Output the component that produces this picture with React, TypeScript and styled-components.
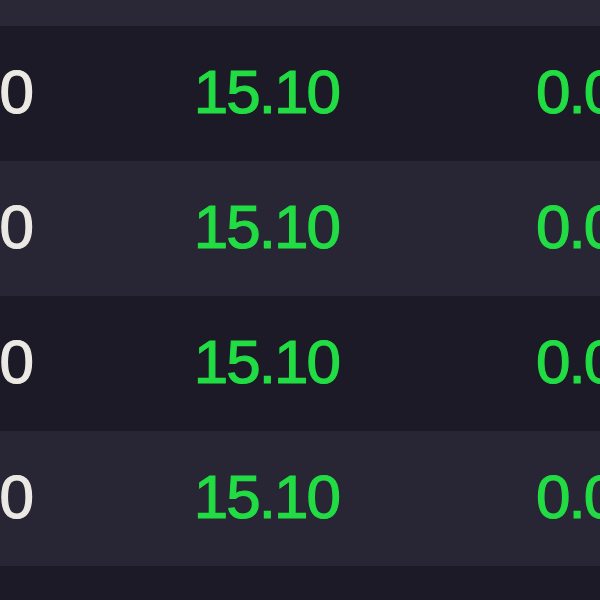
import React from "react";
import styled, { createGlobalStyle } from "styled-components";

const GlobalStyle = createGlobalStyle`
  html, body {
    margin: 0;
    padding: 0;
    background: #1c1a27;
    overflow: hidden;
  }
`;

const Table = styled.div`
  width: 600px;
  height: 600px;
  overflow: hidden;
  display: flex;
  flex-direction: column;
  background: #1c1a27;
  font-family: "Liberation Sans", Arial, sans-serif;
`;

const HeaderStrip = styled.div`
  height: 26px;
  flex-shrink: 0;
  background: #2a2837;
`;

const Row = styled.div<{ striped?: boolean }>`
  height: 135px;
  flex-shrink: 0;
  display: flex;
  align-items: center;
  margin-left: -200px;
  padding-bottom: 4px;
  box-sizing: border-box;
  background: ${(props) => (props.striped ? "#282635" : "#1c1a27")};
`;

const Cell = styled.div<{ width: number; tone?: "light" | "green" }>`
  width: ${(props) => props.width}px;
  flex-shrink: 0;
  text-align: right;
  white-space: nowrap;
  font-size: 62px;
  font-weight: 400;
  letter-spacing: -2px;
  -webkit-text-stroke: 1.2px ${(props) => (props.tone === "green" ? "#22dc44" : "#ece9e4")};
  color: ${(props) => (props.tone === "green" ? "#22dc44" : "#ece9e4")};
`;

const ChangeCell = styled(Cell)`
  text-align: left;
  padding-left: 197px;
`;

const rows = [
  { open: "15.10", close: "15.10", change: "0.00" },
  { open: "15.10", close: "15.10", change: "0.00" },
  { open: "15.10", close: "15.10", change: "0.00" },
  { open: "15.10", close: "15.10", change: "0.00" },
];

export default function App() {
  return (
    <>
      <GlobalStyle />
      <Table>
        <HeaderStrip />
        {rows.map((r, i) => (
          <Row key={i} striped={i % 2 === 1}>
            <Cell width={232}>{r.open}</Cell>
            <Cell width={307} tone="green">{r.close}</Cell>
            <ChangeCell width={400} tone="green">{r.change}</ChangeCell>
          </Row>
        ))}
        <Row />
      </Table>
    </>
  );
}
